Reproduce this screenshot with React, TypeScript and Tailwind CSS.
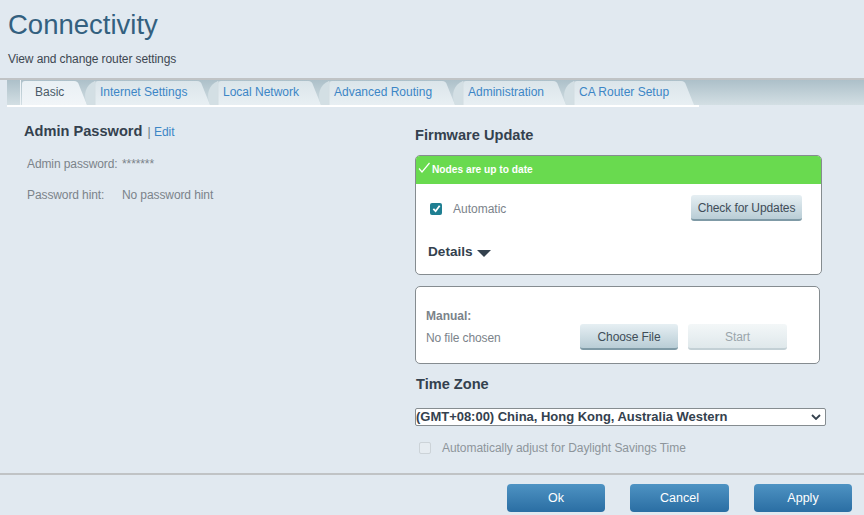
const tabs = [
  { label: "Basic", width: 73 },
  { label: "Internet Settings", width: 123 },
  { label: "Local Network", width: 111 },
  { label: "Advanced Routing", width: 134 },
  { label: "Administration", width: 111 },
  { label: "CA Router Setup", width: 128 },
];

const Tab = ({ label, width, active }: { label: string; width: number; active: boolean }) => {
  const h = 24;
  const w = width - 8;
  const shape = `M0 ${h} V3 Q0 0 3 0 H${w - 13} Q${w - 9} 0 ${w - 8} 4 L${w} ${h} Z`;
  const gradientId = active ? "tab-active" : "tab-idle";
  return (
    <div className={`relative flex h-[24px] shrink-0 items-center pb-[2px] ${active ? "text-[#4a5a68]" : "text-[#3c86c6]"}`} style={{ width }}>
      <svg className="absolute left-0 top-0 overflow-visible" width={w} height={h}>
        <defs>
          <linearGradient id={gradientId} x1="0" y1="0" x2="0" y2="1">
            <stop offset="0" stopColor={active ? "#e9f0f4" : "#dbe5ea"} />
            <stop offset="1" stopColor={active ? "#f1f5f8" : "#e8eff3"} />
          </linearGradient>
        </defs>
        {!active && <path d={`M-8 ${h} C-12 14 -10 4 0 0 V${h} Z`} fill="#d3dfe4" />}
        <path d={shape} fill={`url(#${gradientId})`} />
        {!active && <path d={`M0 0 V${h}`} stroke="#d2dde2" />}
      </svg>
      <span className={`relative whitespace-nowrap text-[12px] ${active ? "pl-[13px]" : "pl-[5px]"}`}>{label}</span>
    </div>
  );
};

const GrayButton = ({ label, width, disabled }: { label: string; width: string; disabled?: boolean }) => (
  <button
    className={`h-[26px] rounded-[3px] border-b-2 pt-[2px] text-[12px] tracking-[-0.1px] ${width} ${
      disabled
        ? "border-[#c3d0d5] bg-gradient-to-b from-[#f3f7f8] to-[#dfe8eb] text-[#9aa5ab]"
        : "border-[#7f9aa6] bg-gradient-to-b from-[#e6eff3] to-[#b9cdd6] text-[#3f4d58]"
    }`}
  >
    {label}
  </button>
);

const FooterButton = ({ label, width }: { label: string; width: string }) => (
  <button className={`h-[28px] rounded-[4px] bg-gradient-to-b from-[#4e93c3] to-[#2a6ea3] text-[12.5px] text-white ${width}`}>
    {label}
  </button>
);

export default function App() {
  return (
    <div className="flex h-[515px] w-[864px] flex-col overflow-hidden bg-[#e1e9f0] font-['Liberation_Sans',Arial,sans-serif] text-[12px] leading-[14px]">
      <header className="h-[78px] shrink-0 pl-[8px]">
        <h1 className="pt-[7px] text-[27.5px] leading-[36px] text-[#33607f]">Connectivity</h1>
        <p className="mt-[9px] text-[12px] leading-[15px] tracking-[-0.1px] text-[#3d4750]">View and change router settings</p>
      </header>

      <nav className="h-[29px] shrink-0 border-t-2 border-[#c0c3c5] pl-[7px]">
        <div className="flex h-[25px] bg-gradient-to-b from-[#adc0c9] to-[#d3dfe4] pl-[13px] pt-[1px]">
          <div className="-mt-[1px] mr-[1px] h-[25px] w-[1px] bg-[#eef3f6]" />
          {tabs.map((tab, i) => (
            <Tab key={tab.label} label={tab.label} width={tab.width} active={i === 0} />
          ))}
        </div>
        <div className="h-[2px] w-[692px] bg-white" />
      </nav>

      <main className="flex h-[366px] shrink-0">
        <section className="w-[415px] shrink-0 pl-[24px] pt-[15px] tracking-[-0.1px]">
          <h2 className="text-[14.6px] font-bold leading-[18px] tracking-normal text-[#34414e]">
            Admin Password{" "}
            <span className="ml-[1px] text-[12px] font-normal text-[#3c86c6]">
              <span className="text-[#6b7780]">|</span> Edit
            </span>
          </h2>
          <div className="mt-[16px] flex pl-[3px] text-[#7b838a]">
            <span className="w-[95px] shrink-0">Admin password:</span>
            <span>*******</span>
          </div>
          <div className="mt-[17px] flex pl-[3px] text-[#7b838a]">
            <span className="w-[95px] shrink-0">Password hint:</span>
            <span>No password hint</span>
          </div>
        </section>

        <section className="w-[412px] shrink-0 pt-[19px]">
          <h2 className="text-[14.6px] font-bold leading-[18px] text-[#34414e]">Firmware Update</h2>
          <div className="mt-[11px] h-[120px] w-[407px] overflow-hidden rounded-[5px] border border-[#858c90] bg-white">
            <div className="flex h-[28px] items-center bg-[#69da4f] pl-[1px] text-[10.2px] font-bold text-white">
              <svg width="14" height="14" viewBox="0 0 14 14" fill="none" stroke="white" strokeWidth="1.2" className="-mt-[4px] mr-[1px]">
                <path d="M2 7.5 L5 11 L12.5 2" />
              </svg>
              Nodes are up to date
            </div>
            <div className="flex items-center justify-between pl-[14px] pr-[19px] pt-[11px]">
              <label className="mt-[1px] flex items-center text-[#7b838a]">
                <span className="flex h-[12px] w-[12px] items-center justify-center rounded-[2px] bg-[#1f7f92]">
                  <svg width="9" height="9" viewBox="0 0 10 10" fill="none" stroke="white" strokeWidth="2">
                    <path d="M1.5 5.5 L4 8 L8.5 2" />
                  </svg>
                </span>
                <span className="ml-[11px]">Automatic</span>
              </label>
              <GrayButton label="Check for Updates" width="w-[111px]" />
            </div>
            <div className="mt-[22px] flex items-center pl-[12px] text-[13.6px] font-bold leading-[18px] text-[#34414e]">
              Details
              <svg width="14" height="7" viewBox="0 0 14 7" className="ml-[4px] mt-[2px]">
                <path d="M0 0 H14 L7 7 Z" fill="#34414e" />
              </svg>
            </div>
          </div>

          <div className="mt-[11px] h-[78px] w-[405px] rounded-[5px] border border-[#858c90] bg-white pl-[10px]">
            <div className="pt-[22px] font-bold text-[#7b838a]">Manual:</div>
            <div className="mt-[1px] flex items-center">
              <span className="w-[154px] pt-[2px] tracking-[-0.1px] text-[#7b838a]">No file chosen</span>
              <GrayButton label="Choose File" width="w-[98px]" />
              <span className="w-[10px]" />
              <GrayButton label="Start" width="w-[99px]" disabled />
            </div>
          </div>

          <h2 className="ml-[1px] mt-[11px] text-[14.6px] font-bold leading-[18px] text-[#34414e]">Time Zone</h2>
          <div className="relative mt-[15px] h-[18px] w-[411px]">
            <select className="h-[18px] w-full appearance-none rounded-[2px] border border-[#858c90] bg-white text-[13px] font-bold leading-[14px] tracking-[-0.02px] text-[#34414e]">
              <option>(GMT+08:00) China, Hong Kong, Australia Western</option>
            </select>
            <svg width="10" height="6" viewBox="0 0 10 6" fill="none" stroke="#34414e" strokeWidth="1.8" className="pointer-events-none absolute right-[5px] top-[6px]">
              <path d="M1 1 L5 5 L9 1" />
            </svg>
          </div>
          <label className="mt-[15px] flex items-center tracking-[-0.05px] text-[#8d959b]">
            <span className="ml-[4px] h-[12px] w-[12px] rounded-[2px] border border-[#ccd3d8] bg-[#e6ecf1]" />
            <span className="ml-[11px]">Automatically adjust for Daylight Savings Time</span>
          </label>
        </section>
      </main>

      <footer className="flex flex-1 justify-end gap-[25px] border-t-2 border-[#c0c3c5] pr-[12px] pt-[9px]">
        <FooterButton label="Ok" width="w-[98px]" />
        <FooterButton label="Cancel" width="w-[99px]" />
        <FooterButton label="Apply" width="w-[98px]" />
      </footer>
    </div>
  );
}
